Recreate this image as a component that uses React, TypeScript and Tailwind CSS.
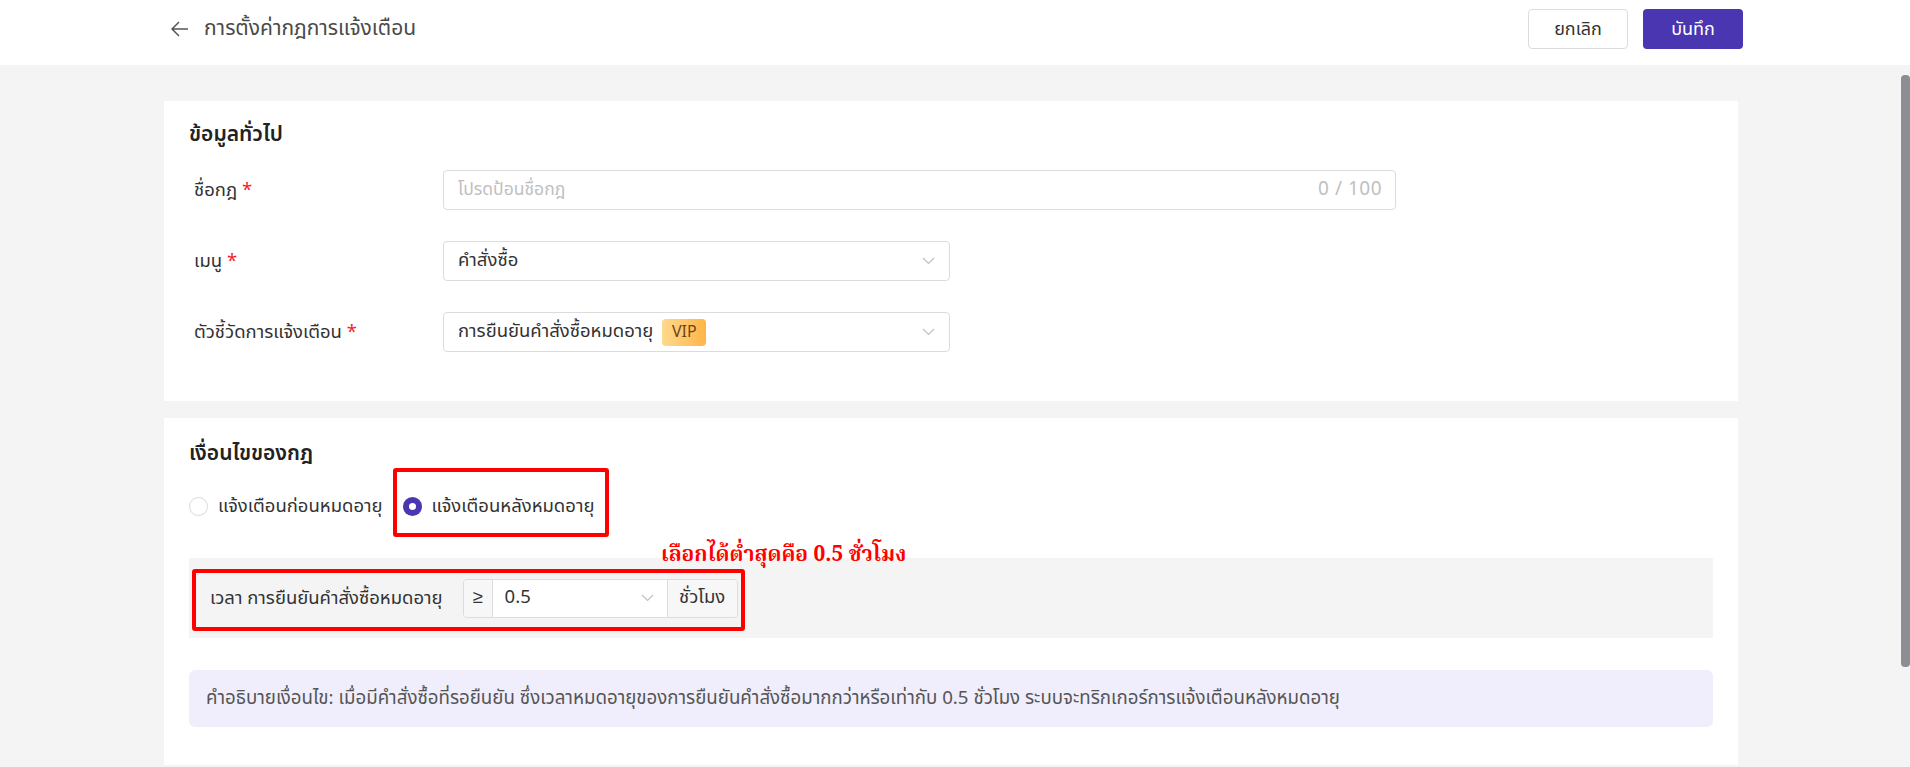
import React from "react";

const Chevron = () => (
  <svg width="13" height="8" viewBox="0 0 13 8" fill="none">
    <polyline points="1,1 6.5,6.5 12,1" stroke="#bfbfbf" strokeWidth="1.1" />
  </svg>
);

const Row = ({ label, children }: { label: string; children: React.ReactNode }) => (
  <div className="flex items-center h-[40px]">
    <div className="w-[254px] pl-[5px] text-[18.5px] leading-[28px] text-[#333]">
      {label} <span className="text-[#f5222d]">*</span>
    </div>
    {children}
  </div>
);

export default function App() {
  return (
    <div className="w-[1910px] h-[767px] overflow-hidden bg-[#f4f4f4] flex flex-col font-['Noto_Sans_Thai','Noto_Sans',sans-serif]">
      <header className="h-[65px] shrink-0 bg-white flex items-center pb-[7px] pl-[171px] pr-[167px]">
        <svg width="18" height="16" viewBox="0 0 18 16" fill="none">
          <path d="M8 1 L1 8 L8 15 M1 8 H17" stroke="#555" strokeWidth="1.5" />
        </svg>
        <div className="ml-[15px] text-[21px] leading-[30px] text-[#4a4a4a]">การตั้งค่ากฎการแจ้งเตือน</div>
        <div className="ml-auto flex gap-[15px]">
          <button className="w-[100px] h-[40px] rounded-[4px] border border-[#dcdcdc] bg-white text-[18px] text-[#333]">ยกเลิก</button>
          <button className="w-[100px] h-[40px] rounded-[4px] bg-[#4a36b1] text-[18px] text-white">บันทึก</button>
        </div>
      </header>
      <div className="flex-1 flex">
        <main className="flex-1 pl-[164px] pr-[163px] pt-[36px] flex flex-col gap-[17px]">
          <section className="bg-white pt-[20px] pb-[49px] px-[25px]">
            <h2 className="text-[21px] leading-[28px] font-semibold text-[#222]">ข้อมูลทั่วไป</h2>
            <div className="mt-[21px] flex flex-col gap-[31px]">
              <Row label="ชื่อกฎ">
                <div className="w-[953px] h-[40px] border border-[#dcdcdc] rounded-[4px] flex items-center pl-[14px] pr-[13px] text-[17.5px]">
                  <span className="text-[#bfbfbf]">โปรดป้อนชื่อกฎ</span>
                  <span className="ml-auto text-[#bfbfbf] text-[19px] tracking-[0.5px]">0 / 100</span>
                </div>
              </Row>
              <Row label="เมนู">
                <div className="w-[507px] h-[40px] border border-[#dcdcdc] rounded-[4px] flex items-center pl-[14px] pr-[14px] text-[18.5px] text-[#333]">
                  <span>คำสั่งซื้อ</span>
                  <span className="ml-auto flex"><Chevron /></span>
                </div>
              </Row>
              <Row label="ตัวชี้วัดการแจ้งเตือน">
                <div className="w-[507px] h-[40px] border border-[#dcdcdc] rounded-[4px] flex items-center pl-[14px] pr-[14px] text-[18.5px] text-[#333]">
                  <span>การยืนยันคำสั่งซื้อหมดอายุ</span>
                  <span className="ml-[9px] h-[27px] w-[44px] justify-center rounded-[4px] bg-gradient-to-r from-[#ffd98c] to-[#ffb545] text-[16px] text-[#6b4514] flex items-center">VIP</span>
                  <span className="ml-auto flex"><Chevron /></span>
                </div>
              </Row>
            </div>
          </section>
          <section className="relative bg-white pt-[22px] pb-[38px] px-[25px]">
            <h2 className="text-[21px] leading-[28px] font-semibold text-[#222]">เงื่อนไขของกฎ</h2>
            <div className="mt-[24px] h-[28px] flex items-center text-[18.5px] leading-[28px] text-[#333]">
              <label className="flex items-center">
                <span className="w-[19px] h-[19px] rounded-full border border-[#d9d9d9] bg-white" />
                <span className="ml-[10px]">แจ้งเตือนก่อนหมดอายุ</span>
              </label>
              <label className="flex items-center ml-[20px]">
                <span className="w-[19px] h-[19px] rounded-full bg-[#4a36b1] flex items-center justify-center">
                  <span className="w-[7px] h-[7px] rounded-full bg-white" />
                </span>
                <span className="ml-[10px]">แจ้งเตือนหลังหมดอายุ</span>
              </label>
            </div>
            <div className="mt-[38px] h-[80px] bg-[#f4f4f5] flex items-center pl-[21px]">
              <span className="text-[18.5px] leading-[28px] text-[#333]">เวลา การยืนยันคำสั่งซื้อหมดอายุ</span>
              <div className="ml-[20px] h-[39px] flex border border-[#dcdcdc] rounded-[4px] overflow-hidden text-[18.5px] text-[#333]">
                <div className="w-[29px] bg-[#f7f7f7] flex items-center justify-center border-r border-[#dcdcdc]">≥</div>
                <div className="w-[174px] bg-white flex items-center pl-[12px] pr-[13px]">
                  <span>0.5</span>
                  <span className="ml-auto flex"><Chevron /></span>
                </div>
                <div className="w-[70px] bg-[#f7f7f7] flex items-center justify-center border-l border-[#dcdcdc]">ชั่วโมง</div>
              </div>
            </div>
            <div className="mt-[32px] h-[57px] rounded-[6px] bg-[#f0eefc] flex items-center pl-[17px] text-[18.7px] text-[#555]">
              คำอธิบายเงื่อนไข: เมื่อมีคำสั่งซื้อที่รอยืนยัน ซึ่งเวลาหมดอายุของการยืนยันคำสั่งซื้อมากกว่าหรือเท่ากับ 0.5 ชั่วโมง ระบบจะทริกเกอร์การแจ้งเตือนหลังหมดอายุ
            </div>
            <div className="absolute left-[229px] top-[50px] w-[216px] h-[69px] border-[4px] border-[#ff0000] rounded-[3px]" />
            <div className="absolute left-[28px] top-[151px] w-[553px] h-[62px] border-[4px] border-[#ff0000] rounded-[3px]" />
            <div className="absolute left-[497px] top-[124px] leading-[28px] text-[21px] font-bold text-[#ff0000] font-['Noto_Serif_Thai','Liberation_Serif',serif]">
              เลือกได้ต่ำสุดคือ 0.5 ชั่วโมง
            </div>
          </section>
        </main>
        <div className="w-[9px] pt-[10px] bg-[#f4f4f4]">
          <div className="h-[592px] rounded-[4px] bg-[#8e8d93]" />
        </div>
      </div>
    </div>
  );
}
